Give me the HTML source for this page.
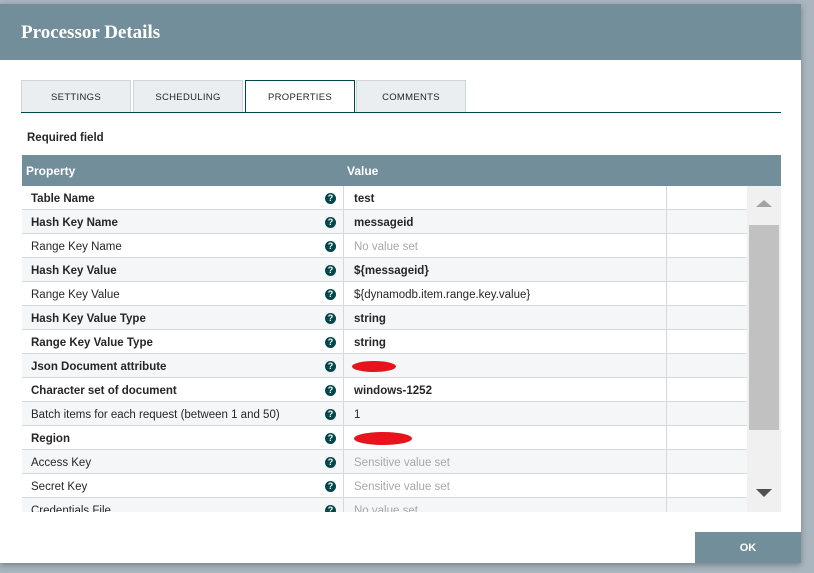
<!DOCTYPE html><html><head><style>
body{margin:0;width:814px;height:573px;background:#a9b5bf;font-family:"Liberation Sans",sans-serif;position:relative;overflow:hidden}
.dlg{position:absolute;left:0;top:4px;width:801px;height:559px;background:#fff;box-shadow:0 2px 6px rgba(0,0,0,.3)}
.hdr{height:56px;background:#728e9b;color:#fff;font-family:"Liberation Serif",serif;font-weight:bold;font-size:19px;line-height:58px;padding-left:21px}
.tab{position:absolute;top:76px;height:31px;width:108px;background:#eaeef0;border:1px solid #cfd6da;border-bottom:none;font-size:9.5px;color:#262626;text-align:center;line-height:34px;letter-spacing:.3px}
.tab.act{background:#fff;border:1px solid #004849;border-bottom:none;height:32px}
.line{position:absolute;left:21px;top:108px;width:760px;height:1px;background:#004849}
.req{position:absolute;left:27px;top:128px;font-size:11.5px;font-weight:bold;color:#262626}
.th{position:absolute;left:22px;top:151px;width:759px;height:31px;background:#728e9b;color:#fff;font-weight:bold;font-size:12px;line-height:33px}
.rows{position:absolute;left:22px;top:182px;width:725px;height:326px;overflow:hidden}
.r{height:23px;border-bottom:1px solid #d4d9dc;font-size:11.5px;line-height:26px;position:relative;color:#262626}
.r:nth-child(even){background:#f4f6f7}
.r .p{position:absolute;left:9px}
.r .q{position:absolute;left:303px;top:7px;width:11px;height:11px;border-radius:50%;background:#004849;color:#fff;font-size:9px;line-height:11px;text-align:center;font-weight:bold}
.r .v{position:absolute;left:321px;top:0;height:24px;border-left:1px solid #d4d9dc;padding-left:10px;width:312px}
.r .e{position:absolute;left:644px;top:0;height:24px;border-left:1px solid #d4d9dc}
.b{font-weight:bold}.g{color:#a8a8a8}
.sb{position:absolute;left:747px;top:182px;width:34px;height:326px;background:#f0f0f0}
.thumb{position:absolute;left:2px;top:39px;width:30px;height:205px;background:#c1c1c1}
.red{display:inline-block;background:#e8141c;border-radius:50%;vertical-align:middle}
.ok{position:absolute;left:695px;top:528px;width:106px;height:31px;background:#728e9b;color:#fff;font-weight:bold;font-size:11px;text-align:center;line-height:33px}
</style></head><body>
<div class="dlg">
<div class="hdr">Processor Details</div>
<div class="tab" style="left:21px">SETTINGS</div>
<div class="tab" style="left:133px">SCHEDULING</div>
<div class="tab act" style="left:245px">PROPERTIES</div>
<div class="tab" style="left:356px">COMMENTS</div>
<div class="line"></div>
<div class="req">Required field</div>
<div class="th"><span style="position:absolute;left:4px">Property</span><span style="position:absolute;left:325px">Value</span></div>
<div class="rows">
<div class="r"><span class="p b">Table Name</span><span class="q">?</span><span class="v b">test</span><span class="e"></span></div>
<div class="r"><span class="p b">Hash Key Name</span><span class="q">?</span><span class="v b">messageid</span><span class="e"></span></div>
<div class="r"><span class="p">Range Key Name</span><span class="q">?</span><span class="v g">No value set</span><span class="e"></span></div>
<div class="r"><span class="p b">Hash Key Value</span><span class="q">?</span><span class="v b">${messageid}</span><span class="e"></span></div>
<div class="r"><span class="p">Range Key Value</span><span class="q">?</span><span class="v">${dynamodb.item.range.key.value}</span><span class="e"></span></div>
<div class="r"><span class="p b">Hash Key Value Type</span><span class="q">?</span><span class="v b">string</span><span class="e"></span></div>
<div class="r"><span class="p b">Range Key Value Type</span><span class="q">?</span><span class="v b">string</span><span class="e"></span></div>
<div class="r"><span class="p b">Json Document attribute</span><span class="q">?</span><span class="v"><span class="red" style="width:44px;height:11px;margin-left:-2px"></span></span><span class="e"></span></div>
<div class="r"><span class="p b">Character set of document</span><span class="q">?</span><span class="v b">windows-1252</span><span class="e"></span></div>
<div class="r"><span class="p">Batch items for each request (between 1 and 50)</span><span class="q">?</span><span class="v">1</span><span class="e"></span></div>
<div class="r"><span class="p b">Region</span><span class="q">?</span><span class="v"><span class="red" style="width:58px;height:13px"></span></span><span class="e"></span></div>
<div class="r"><span class="p">Access Key</span><span class="q">?</span><span class="v g">Sensitive value set</span><span class="e"></span></div>
<div class="r"><span class="p">Secret Key</span><span class="q">?</span><span class="v g">Sensitive value set</span><span class="e"></span></div>
<div class="r"><span class="p">Credentials File</span><span class="q">?</span><span class="v g">No value set</span><span class="e"></span></div>
</div>
<div class="sb"><div style="position:absolute;left:9px;top:14px;border:8px solid transparent;border-bottom:7px solid #a3a3a3;border-top:none"></div><div class="thumb"></div><div style="position:absolute;left:9px;top:303px;border:8px solid transparent;border-top:8px solid #505050;border-bottom:none"></div></div>
<div class="ok">OK</div>
</div>
</body></html>
